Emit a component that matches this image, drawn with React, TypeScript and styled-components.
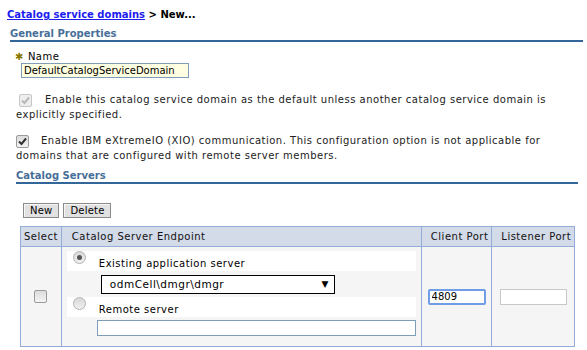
import React from 'react';
import styled, { createGlobalStyle } from 'styled-components';

const Global = createGlobalStyle`
  body {
    margin: 0;
    background: #fff;
    font-family: "DejaVu Sans", Verdana, sans-serif;
    font-size: 10px;
    letter-spacing: 0.5px;
    color: #000;
  }
`;

const Page = styled.div`
  width: 587px;
  height: 350px;
  overflow: hidden;
  padding: 9px 0 0 7px;
  box-sizing: border-box;
`;

const Crumb = styled.div`
  font-weight: bold;
  letter-spacing: 0;
  color: #000;
  margin-bottom: 8px;
  a {
    color: #1c1cf0;
    text-decoration: underline;
  }
`;

const SectionTitle = styled.div<{ $indent: number; $right: number; $top?: number }>`
  margin: ${p => p.$top ?? 0}px ${p => p.$right}px 0 ${p => p.$indent}px;
  font-weight: bold;
  letter-spacing: 0;
  color: #476f99;
  padding-bottom: 1px;
  border-bottom: 2px solid #336699;
`;

const FieldLabel = styled.div`
  margin: 9px 0 0 8px;
  display: flex;
  align-items: center;
  gap: 4px;
  line-height: 12px;
`;

const Star = styled.span`
  color: #8a7a00;
  font-size: 10px;
`;

const NameInput = styled.input`
  margin: 0 0 0 14px;
  width: 168px;
  height: 15px;
  box-sizing: border-box;
  border: 1px solid #7f9db9;
  background: #ffffe1;
  font: inherit;
  letter-spacing: 0;
  padding: 0 2px;
  color: #000;
  outline: none;
`;

const CheckRow = styled.div<{ $top: number }>`
  margin: ${p => p.$top}px 0 0 9px;
  line-height: 15px;
  width: 562px;
  color: #222;
`;

const Box = styled.span<{ $disabled?: boolean; $gap: number; $shift: number }>`
  display: inline-flex;
  align-items: center;
  justify-content: center;
  width: 13px;
  height: 13px;
  box-sizing: border-box;
  vertical-align: -2px;
  margin: 0 ${p => p.$gap}px 0 ${p => p.$shift}px;
  border: 1px solid ${p => (p.$disabled ? '#c6c6c6' : '#9a9a9a')};
  border-radius: 2px;
  background: ${p => (p.$disabled ? '#eeeeee' : 'linear-gradient(#dcdcdc, #f4f4f4)')};
`;

const Radio = styled.span<{ $on?: boolean }>`
  display: inline-flex;
  align-items: center;
  justify-content: center;
  width: 13px;
  height: 13px;
  box-sizing: border-box;
  border-radius: 50%;
  border: 1px solid #b4b4b4;
  background: linear-gradient(#d8d8d8, #f0f0f0);
  transform: translateY(-4px);
  &::after {
    content: '';
    display: ${p => (p.$on ? 'block' : 'none')};
    width: 5px;
    height: 5px;
    border-radius: 50%;
    background: #555;
  }
`;

const Check = ({ disabled, gap = 12, shift = 0 }: { disabled?: boolean; gap?: number; shift?: number }) => (
  <Box $disabled={disabled} $gap={gap} $shift={shift}>
    <svg width="9" height="9" viewBox="0 0 9 9">
      <path d="M1 4.5 L3.5 7 L8 1.5" fill="none" stroke={disabled ? '#b8b8b8' : '#333'} strokeWidth="2" />
    </svg>
  </Box>
);

const Buttons = styled.div`
  display: flex;
  gap: 4px;
  margin: 19px 0 0 16px;
`;

const Btn = styled.button`
  height: 15px;
  padding: 0 6px;
  font: inherit;
  letter-spacing: 0.2px;
  color: #000;
  background: #e1e1e1;
  border: 1px solid #8a8a8a;
  box-shadow: inset 1px 1px 0 #f6f6f6;
  line-height: 12px;
`;

const Table = styled.table`
  margin: 8px 0 0 13px;
  width: 554px;
  border-collapse: collapse;
  border: 1px solid #93acd8;
  th, td {
    border: 1px solid #93acd8;
  }
  th {
    background: #d3dae8;
    font-weight: normal;
    height: 19px;
    text-align: left;
    padding: 0 3px;
    color: #111;
    white-space: nowrap;
  }
  td {
    background: #f5f5f5;
    vertical-align: middle;
    padding: 0;
  }
`;

const HeadCell = styled.th<{ $w?: number; $pad: number }>`
  ${p => (p.$w ? `width: ${p.$w}px;` : '')}
  && {
    padding-left: ${p => p.$pad}px;
  }
`;

const SelectCell = styled.td`
  text-align: center;
`;

const Endpoint = styled.div`
  padding: 4px 5px 10px 5px;
`;

const Choice = styled.div`
  background: #fff;
  height: 20px;
  display: flex;
  align-items: center;
  gap: 13px;
  padding-left: 6px;
  span + span {
    transform: translateY(2px);
  }
`;

const DropRow = styled.div`
  height: 26px;
  display: flex;
  align-items: center;
  padding-left: 34px;
`;

const Drop = styled.div`
  width: 234px;
  height: 19px;
  box-sizing: border-box;
  border: 1px solid #000;
  background: #fff;
  display: flex;
  align-items: center;
  justify-content: space-between;
  padding: 0 5px 0 8px;
  font-size: 10.5px;
`;

const Arrow = styled.span`
  font-size: 9px;
`;

const RemoteInput = styled.input`
  display: block;
  margin: 3px 0 0 30px;
  width: 319px;
  height: 16px;
  box-sizing: border-box;
  border: 1px solid #7f9db9;
  background: #fff;
  font: inherit;
  outline: none;
`;

const PortCell = styled.td`
  text-align: center;
`;

const PortInput = styled.input<{ $focus?: boolean; $w: number }>`
  display: block;
  margin: 0 auto;
  width: ${p => p.$w}px;
  height: 16px;
  box-sizing: border-box;
  font: inherit;
  padding: 0 2px;
  background: #fff;
  outline: none;
  border: ${p => (p.$focus ? '2px solid #6f9de8' : '1px solid #c8c8c8')};
  border-radius: ${p => (p.$focus ? '2px' : '0')};
`;

export default function App() {
  return (
    <Page>
      <Global />
      <Crumb>
        <a>Catalog service domains</a> &gt; New...
      </Crumb>
      <SectionTitle $indent={3} $right={4}>General Properties</SectionTitle>
      <FieldLabel>
        <Star>✱</Star>Name
      </FieldLabel>
      <NameInput defaultValue="DefaultCatalogServiceDomain" />
      <CheckRow $top={14}>
        <Check disabled shift={3} gap={13} />
        Enable this catalog service domain as the default unless another catalog service domain is
        explicitly specified.
      </CheckRow>
      <CheckRow $top={11}>
        <Check gap={12} />
        Enable IBM eXtremeIO (XIO) communication. This configuration option is not applicable for
        domains that are configured with remote server members.
      </CheckRow>
      <SectionTitle $indent={9} $right={9} $top={7}>Catalog Servers</SectionTitle>
      <Buttons>
        <Btn>New</Btn>
        <Btn>Delete</Btn>
      </Buttons>
      <Table>
        <thead>
          <tr>
            <HeadCell $w={34} $pad={3}>Select</HeadCell>
            <HeadCell $pad={10}>Catalog Server Endpoint</HeadCell>
            <HeadCell $w={58} $pad={9}>Client Port</HeadCell>
            <HeadCell $w={68} $pad={9}>Listener Port</HeadCell>
          </tr>
        </thead>
        <tbody>
          <tr>
            <SelectCell>
              <Box $gap={0} $shift={0} />
            </SelectCell>
            <td>
              <Endpoint>
                <Choice>
                  <Radio $on />
                  <span>Existing application server</span>
                </Choice>
                <DropRow>
                  <Drop>
                    <span>odmCell\dmgr\dmgr</span>
                    <Arrow>▼</Arrow>
                  </Drop>
                </DropRow>
                <Choice>
                  <Radio />
                  <span>Remote server</span>
                </Choice>
                <RemoteInput />
              </Endpoint>
            </td>
            <PortCell>
              <PortInput $focus $w={58} defaultValue="4809" />
            </PortCell>
            <PortCell>
              <PortInput $w={67} />
            </PortCell>
          </tr>
        </tbody>
      </Table>
    </Page>
  );
}
